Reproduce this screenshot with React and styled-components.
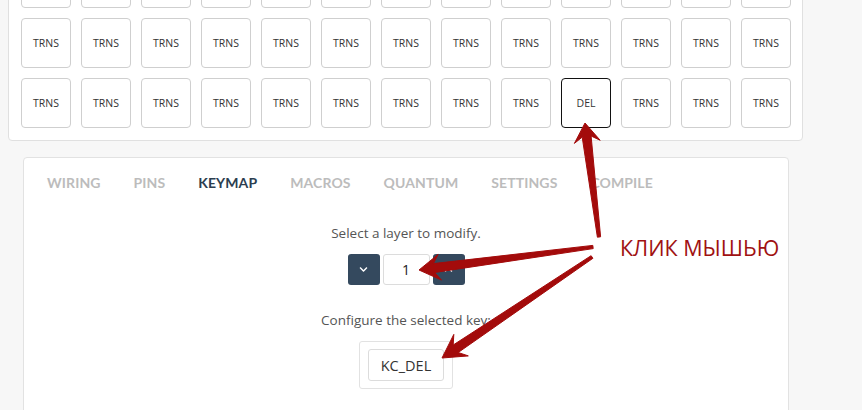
import React from 'react';
import styled, { createGlobalStyle } from 'styled-components';
import { FaChevronDown, FaChevronUp } from 'react-icons/fa';

const GlobalStyle = createGlobalStyle`
  html, body {
    margin: 0;
    padding: 0;
    background: #f7f7f7;
    font-family: "Open Sans", "Liberation Sans", sans-serif;
    overflow: hidden;
  }
`;

const Page = styled.div`
  position: relative;
  width: 862px;
  height: 410px;
  overflow: hidden;
`;

// the page is scrolled, so the keyboard card starts above the viewport
const Scroller = styled.div`
  margin-top: -55px;
`;

const KeyboardCard = styled.div`
  margin: 0 59px 0 8px;
  padding: 12px;
  background: #fff;
  border: 1px solid #e0e0e0;
  border-radius: 4px;
`;

const KeyGrid = styled.div`
  display: grid;
  grid-template-columns: repeat(13, 50px);
  grid-auto-rows: 50px;
  gap: 10px;
`;

const Key = styled.div`
  display: flex;
  align-items: center;
  justify-content: center;
  box-sizing: border-box;
  border: 1px solid ${(p) => (p.$selected ? '#111' : '#cfcfcf')};
  border-radius: 4px;
  font-size: 10.5px;
  color: #333;
  background: #fff;
`;

const PanelCard = styled.div`
  margin: 16px 73px 0 23px;
  height: 300px;
  background: #fff;
  border: 1px solid #e2e2e2;
  border-radius: 4px;
`;

const Tabs = styled.div`
  display: flex;
  gap: 33px;
  padding: 16px 0 0 23px;
`;

const Tab = styled.div`
  font-family: Lato, "Open Sans", sans-serif;
  font-weight: 700;
  font-size: 14px;
  letter-spacing: 0.1px;
  color: ${(p) => (p.$active ? '#2c3e50' : '#bcbcbc')};
`;

const Body = styled.div`
  display: flex;
  flex-direction: column;
  align-items: center;
  padding-top: 33px;
`;

const Label = styled.div`
  font-size: 13.5px;
  color: #555;
  line-height: 18px;
`;

const LayerRow = styled.div`
  display: flex;
  gap: 3px;
  margin-top: 12px;
`;

const StepButton = styled.div`
  width: 32px;
  height: 31px;
  display: flex;
  align-items: center;
  justify-content: center;
  background: #34495e;
  border-radius: 3px;
  color: #fff;
  font-size: 9px;
`;

const LayerInput = styled.div`
  width: 47px;
  height: 31px;
  box-sizing: border-box;
  border: 1px solid #dcdcdc;
  border-radius: 3px;
  display: flex;
  align-items: center;
  justify-content: center;
  font-size: 14px;
  color: #222;
`;

const ConfigLabel = styled(Label)`
  margin-top: 26px;
`;

const KeyBox = styled.div`
  margin-top: 12px;
  padding: 7px 8px;
  border: 1px solid #e2e2e2;
  border-radius: 3px;
`;

const KeyCode = styled.div`
  width: 76px;
  height: 32px;
  box-sizing: border-box;
  border: 1px solid #dcdcdc;
  border-radius: 3px;
  display: flex;
  align-items: center;
  justify-content: center;
  font-size: 14.5px;
  color: #333;
`;

const Overlay = styled.svg`
  position: absolute;
  left: 0;
  top: 0;
  pointer-events: none;
`;

const Note = styled.div`
  position: absolute;
  left: 620px;
  top: 233px;
  font-family: "Open Sans", "Liberation Sans", sans-serif;
  font-size: 21.5px;
  color: #a01212;
  white-space: nowrap;
`;

const tabs = ['WIRING', 'PINS', 'KEYMAP', 'MACROS', 'QUANTUM', 'SETTINGS', 'COMPILE'];

function arrow(tail, tip, headLen, headHalf, neckHalf, tailHalf) {
  const dx = tip[0] - tail[0];
  const dy = tip[1] - tail[1];
  const len = Math.hypot(dx, dy);
  const ux = dx / len;
  const uy = dy / len;
  const nx = -uy;
  const ny = ux;
  const corner = [tip[0] - ux * headLen, tip[1] - uy * headLen];
  const neck = [tip[0] - ux * headLen * 0.72, tip[1] - uy * headLen * 0.72];
  const pts = [
    [tail[0] + nx * tailHalf, tail[1] + ny * tailHalf],
    [neck[0] + nx * neckHalf, neck[1] + ny * neckHalf],
    [corner[0] + nx * headHalf, corner[1] + ny * headHalf],
    tip,
    [corner[0] - nx * headHalf, corner[1] - ny * headHalf],
    [neck[0] - nx * neckHalf, neck[1] - ny * neckHalf],
    [tail[0] - nx * tailHalf, tail[1] - ny * tailHalf],
  ];
  return pts.map((p) => p.map((v) => v.toFixed(1)).join(',')).join(' ');
}

const arrows = [
  arrow([599, 237], [585, 123], 19, 13, 4.5, 1.6),
  arrow([593, 247], [419, 270], 21, 13, 4.5, 1.6),
  arrow([592, 257], [442, 358], 23, 13, 4.5, 1.6),
];

function App() {
  const keys = [];
  for (let r = 0; r < 3; r++) {
    for (let c = 0; c < 13; c++) {
      const del = r === 2 && c === 9;
      keys.push(
        <Key key={`${r}-${c}`} $selected={del}>
          {del ? 'DEL' : 'TRNS'}
        </Key>
      );
    }
  }

  return (
    <Page>
      <GlobalStyle />
      <Scroller>
        <KeyboardCard>
          <KeyGrid>{keys}</KeyGrid>
        </KeyboardCard>
        <PanelCard>
          <Tabs>
            {tabs.map((t) => (
              <Tab key={t} $active={t === 'KEYMAP'}>{t}</Tab>
            ))}
          </Tabs>
          <Body>
            <Label>Select a layer to modify.</Label>
            <LayerRow>
              <StepButton><FaChevronDown /></StepButton>
              <LayerInput>1</LayerInput>
              <StepButton><FaChevronUp /></StepButton>
            </LayerRow>
            <ConfigLabel>Configure the selected key:</ConfigLabel>
            <KeyBox>
              <KeyCode>KC_DEL</KeyCode>
            </KeyBox>
          </Body>
        </PanelCard>
      </Scroller>
      <Overlay width="862" height="410" viewBox="0 0 862 410">
        {arrows.map((pts, i) => (
          <polygon key={i} points={pts} fill="#a30b0b" stroke="#a30b0b" strokeWidth="1" strokeLinejoin="round" />
        ))}
      </Overlay>
      <Note>КЛИК МЫШЬЮ</Note>
    </Page>
  );
}

export default App;
